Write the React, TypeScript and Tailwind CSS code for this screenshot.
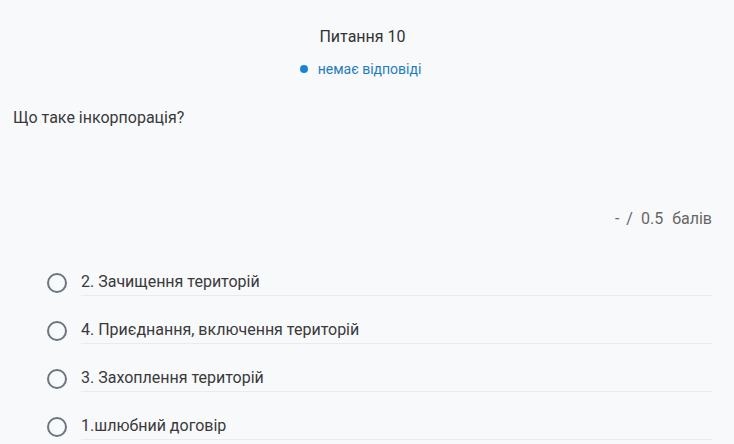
import React from "react";

const options = [
  "2. Зачищення територій",
  "4. Приєднання, включення територій",
  "3. Захоплення територій",
  "1.шлюбний договір",
];

export default function App() {
  return (
    <div
      className="w-[734px] h-[444px] overflow-hidden bg-[#f8f9fb] text-[#333]"
      style={{ fontFamily: "Roboto, 'Noto Sans', sans-serif" }}
    >
      <div className="pl-[13px] pr-[22px]">
        <div className="pt-[27px] flex flex-col items-center">
          <div className="text-[16px] leading-[20px] text-[#333]">Питання 10</div>
          <div className="mt-[13px] flex items-center gap-[10px] text-[14px] leading-[18px] text-[#1f7dc1] pr-[4px]">
            <span className="w-[8px] h-[8px] rounded-full bg-[#1a82d6]" />
            <span>немає відповіді</span>
          </div>
        </div>
        <div className="mt-[30px] text-[16px] leading-[20px] text-[#3a3a3a]">Що таке інкорпорація?</div>
        <div className="mt-[81px] flex justify-end gap-[7px] text-[16px] leading-[20px] text-[#666]">
          <span>-</span>
          <span>/</span>
          <span className="ml-[1px]">0.5</span>
          <span className="ml-[2px]">балів</span>
        </div>
        <div className="mt-[19px] flex flex-col">
          {options.map((o) => (
            <div key={o} className="flex items-end h-[48px]">
              <div className="w-[68px] h-[20px] mb-[3px] flex items-center justify-end pr-[14px] shrink-0">
                <span className="w-[20px] h-[20px] rounded-full border-2 border-[#6b7680] box-border" />
              </div>
              <div className="flex-1 pb-[3px] border-b border-[#e9ebee] text-[16px] leading-[20px] text-[#3a3a3a]">
                {o}
              </div>
            </div>
          ))}
        </div>
      </div>
    </div>
  );
}
